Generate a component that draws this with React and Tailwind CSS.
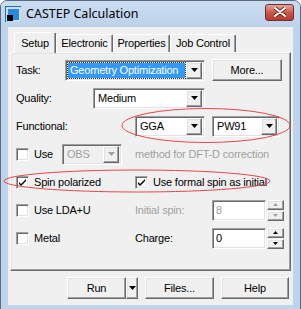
import React from "react";

const font = "font-['Liberation_Sans',Arial,sans-serif] text-[11px] tracking-[-0.2px]";
const raised =
  "border border-t-white border-l-white border-r-[#696969] border-b-[#696969] shadow-[inset_-1px_-1px_0_#a0a0a0,inset_1px_1px_0_#e3e3e3]";
const sunken =
  "border border-t-[#a0a0a0] border-l-[#a0a0a0] border-r-white border-b-white shadow-[inset_1px_1px_0_#696969,inset_-1px_-1px_0_#e3e3e3]";

function Arrow({ up, gray, small }) {
  const w = small ? 5 : 7;
  const h = small ? 3 : 4;
  return (
    <svg width={w} height={h} viewBox={`0 0 ${w} ${h}`}>
      <polygon
        points={up ? `0,${h} ${w},${h} ${w / 2},0` : `0,0 ${w},0 ${w / 2},${h}`}
        fill={gray ? "#a0a0a0" : "#000"}
      />
    </svg>
  );
}

function Select({ w, text, selected, disabled }) {
  return (
    <div
      className={`${sunken} h-[21px] flex items-center p-[2px] ${disabled ? "bg-[#f0f0f0]" : "bg-white"}`}
      style={{ width: w }}
    >
      <div className="flex-1 h-full flex items-center">
        {selected ? (
          <span className="flex-1 h-full flex items-center pl-[2px] mr-[1px] bg-[#3399ff] text-white outline-1 outline-dotted outline-[#333]">
            {text}
          </span>
        ) : (
          <span className={`pl-[2px] ${disabled ? "text-[#a0a0a0]" : ""}`}>{text}</span>
        )}
      </div>
      <div className={`${raised} bg-[#f0f0f0] w-[16px] h-[17px] flex items-center justify-center`}>
        <Arrow gray={disabled} />
      </div>
    </div>
  );
}

function Check({ checked }) {
  return (
    <div className={`${sunken} w-[13px] h-[13px] bg-white flex items-center justify-center shrink-0`}>
      {checked && (
        <svg width="7" height="7" viewBox="0 0 7 7">
          <path d="M0 3 L2 5 L7 0 L7 2 L2 7 L0 5 Z" fill="#000" />
        </svg>
      )}
    </div>
  );
}

function Button({ w, children }) {
  return (
    <div className={`${raised} bg-[#f0f0f0] h-[22px] flex items-center justify-center`} style={{ width: w }}>
      {children}
    </div>
  );
}

function SpinBox({ value, disabled }) {
  return (
    <div className="flex items-center">
      <div className={`${sunken} w-[54px] h-[21px] bg-white flex items-center pl-[3px] ${disabled ? "text-[#a0a0a0]" : ""}`}>
        {value}
      </div>
      <div className="flex flex-col ml-[1px]">
        <div className={`${raised} bg-[#f0f0f0] w-[17px] h-[10px] flex items-center justify-center`}>
          <Arrow up small gray={disabled} />
        </div>
        <div className={`${raised} bg-[#f0f0f0] w-[17px] h-[10px] flex items-center justify-center mt-[1px]`}>
          <Arrow small gray={disabled} />
        </div>
      </div>
    </div>
  );
}

function Tab({ label, active, w }) {
  return (
    <div
      className={`relative flex items-center justify-center border-l border-t border-l-white border-t-white border-r border-r-[#696969] shadow-[inset_-1px_0_0_#a0a0a0] rounded-t-[2px] bg-[#f0f0f0] ${
        active ? "h-[21px] z-10 -mb-px" : "h-[18px]"
      }`}
      style={{ width: w }}
    >
      {label}
    </div>
  );
}

export default function App() {
  return (
    <div className={`relative w-[301px] h-[309px] overflow-hidden bg-white ${font} text-black`}>
      <div className="w-[301px] h-[314px] rounded-t-[7px] border border-[#5a6b7e] bg-[#bed4ec] flex flex-col">
        {/* title bar */}
        <div className="h-[26px] flex items-center bg-gradient-to-b from-[#c9dcf1] to-[#bcd2eb] rounded-t-[6px] pl-[4px] pr-[6px]">
          <svg width="16" height="16" viewBox="0 0 16 16">
            <rect x="0" y="0" width="16" height="16" fill="#1f6fc7" />
            <rect x="2" y="2" width="13" height="13" fill="#2f86de" stroke="#fff" strokeWidth="1.5" />
            <rect x="2" y="9" width="6" height="6" fill="#000" />
          </svg>
          <span className="ml-[5px] font-['Noto_Sans',sans-serif] text-[12.5px] tracking-normal text-black">
            CASTEP Calculation
          </span>
          <div className="ml-auto mt-[-4px] w-[29px] h-[17px] rounded-[3px] border border-[#6b2f2f] bg-gradient-to-b from-[#e4a49a] via-[#c9574a] to-[#b8372c] flex items-center justify-center">
            <svg width="12" height="10" viewBox="0 0 12 10">
              <path d="M1 1 L11 9 M11 1 L1 9" stroke="#4a1a1a" strokeWidth="3.4" strokeLinecap="round" />
              <path d="M1 1 L11 9 M11 1 L1 9" stroke="#fff" strokeWidth="2" strokeLinecap="round" />
            </svg>
          </div>
        </div>

        {/* client */}
        <div className="mx-[7px] h-[278px] bg-[#f0f0f0] relative">
          <div className="flex items-end h-[25px] pl-[6px]">
            <Tab label="Setup" active w={42} />
            <Tab label="Electronic" w={57} />
            <Tab label="Properties" w={57} />
            <Tab label="Job Control" w={66} />
          </div>

          <div className={`${raised} mx-[2px] h-[219px] pl-[5px] pt-[3px]`}>
            <div className="h-[28px] flex items-center">
              <span className="w-[49px]">Task:</span>
              <Select w={140} text="Geometry Optimization" selected />
              <div className="ml-[7px]">
                <Button w={70}>More...</Button>
              </div>
            </div>
            <div className="h-[28px] flex items-center">
              <span className="w-[77px]">Quality:</span>
              <Select w={112} text="Medium" />
            </div>
            <div className="h-[28px] flex items-center">
              <span className="w-[119px]">Functional:</span>
              <Select w={70} text="GGA" />
              <div className="ml-[7px]">
                <Select w={68} text="PW91" />
              </div>
            </div>
            <div className="h-[28px] flex items-center">
              <div className="w-[119px] flex items-center">
                <Check />
                <span className="ml-[5px] w-[28px]">Use</span>
                <Select w={60} text="OBS" disabled />
              </div>
              <span className="text-[#a0a0a0]">method for DFT-D correction</span>
            </div>
            <div className="h-[28px] flex items-center">
              <div className="w-[119px] flex items-center">
                <Check checked />
                <span className="ml-[5px]">Spin polarized</span>
              </div>
              <Check checked />
              <span className="ml-[5px]">Use formal spin as initial</span>
            </div>
            <div className="h-[28px] flex items-center">
              <div className="w-[119px] flex items-center">
                <Check />
                <span className="ml-[5px]">Use LDA+U</span>
              </div>
              <span className="w-[77px] text-[#a0a0a0]">Initial spin:</span>
              <SpinBox value="8" disabled />
            </div>
            <div className="h-[28px] flex items-center">
              <div className="w-[119px] flex items-center">
                <Check />
                <span className="ml-[5px]">Metal</span>
              </div>
              <span className="w-[77px]">Charge:</span>
              <SpinBox value="0" />
            </div>
          </div>

          <div className="flex items-center mt-[6px] pl-[59px]">
            <Button w={59}>Run</Button>
            <Button w={12}>
              <Arrow />
            </Button>
            <div className="ml-[7px]">
              <Button w={69}>Files...</Button>
            </div>
            <div className="ml-[7px]">
              <Button w={68}>Help</Button>
            </div>
          </div>
        </div>
      </div>

      {/* red annotation ellipses */}
      <svg className="absolute left-0 top-0 pointer-events-none" width="301" height="309">
        <ellipse cx="206" cy="125.5" rx="84" ry="17" fill="none" stroke="#e8474c" strokeWidth="1" />
        <ellipse cx="137" cy="181" rx="133" ry="11" fill="none" stroke="#e8474c" strokeWidth="1" />
      </svg>
    </div>
  );
}
